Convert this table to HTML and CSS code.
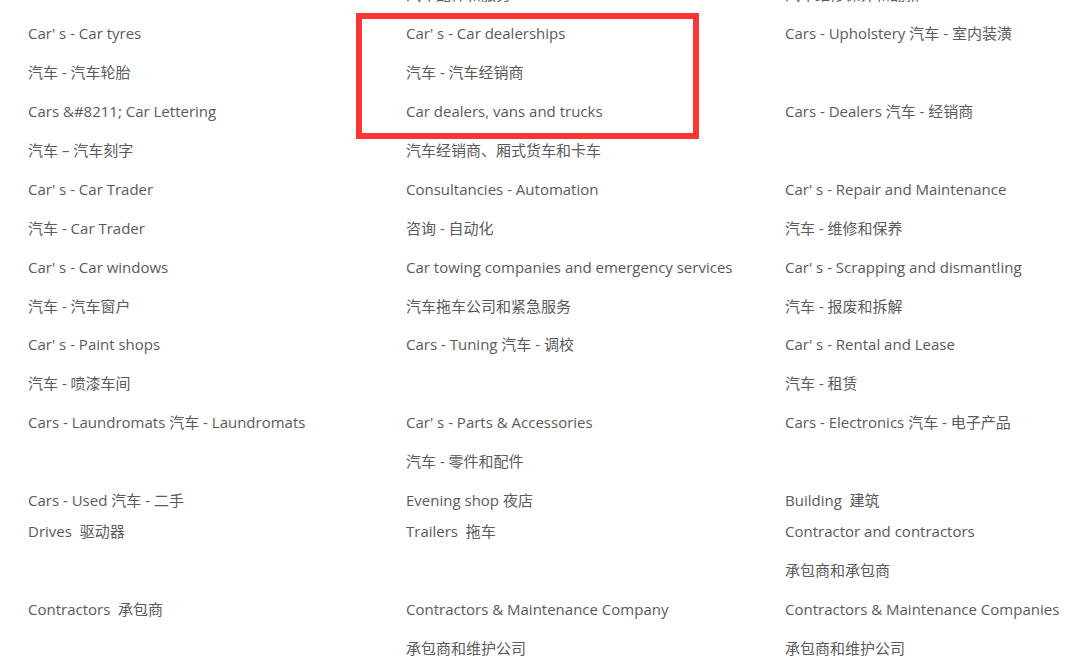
FILE: index.html
```html
<!DOCTYPE html>
<html lang="zh-CN">
<head>
    <meta charset="UTF-8">
    <meta name="viewport" content="width=device-width, initial-scale=1.0">
    <title>Cars - Categories</title>
    <link rel="stylesheet" href="styles.css">
</head>
<body>
    <div class="page">
        <div class="categories">
            <!-- row 0, scrolled off the top -->
            <div class="cell"></div>
            <div class="cell"><p>汽车配件和服务</p></div>
            <div class="cell"><p>汽车维修保养和翻新</p></div>

            <div class="cell">
                <p>Car' s - Car tyres</p>
                <p>汽车 - 汽车轮胎</p>
            </div>
            <div class="cell">
                <p>Car' s - Car dealerships</p>
                <p>汽车 - 汽车经销商</p>
            </div>
            <div class="cell">
                <p>Cars - Upholstery 汽车 - 室内装潢</p>
            </div>

            <div class="cell">
                <p>Cars &amp;#8211; Car Lettering</p>
                <p>汽车 – 汽车刻字</p>
            </div>
            <div class="cell">
                <p>Car dealers, vans and trucks</p>
                <p>汽车经销商、厢式货车和卡车</p>
            </div>
            <div class="cell">
                <p>Cars - Dealers 汽车 - 经销商</p>
            </div>

            <div class="cell">
                <p>Car' s - Car Trader</p>
                <p>汽车 - Car Trader</p>
            </div>
            <div class="cell">
                <p>Consultancies - Automation</p>
                <p>咨询 - 自动化</p>
            </div>
            <div class="cell">
                <p>Car' s - Repair and Maintenance</p>
                <p>汽车 - 维修和保养</p>
            </div>

            <div class="cell">
                <p>Car' s - Car windows</p>
                <p>汽车 - 汽车窗户</p>
            </div>
            <div class="cell">
                <p>Car towing companies and emergency services</p>
                <p>汽车拖车公司和紧急服务</p>
            </div>
            <div class="cell">
                <p>Car' s - Scrapping and dismantling</p>
                <p>汽车 - 报废和拆解</p>
            </div>

            <div class="cell">
                <p>Car' s - Paint shops</p>
                <p>汽车 - 喷漆车间</p>
            </div>
            <div class="cell">
                <p>Cars - Tuning 汽车 - 调校</p>
            </div>
            <div class="cell">
                <p>Car' s - Rental and Lease</p>
                <p>汽车 - 租赁</p>
            </div>

            <div class="cell">
                <p>Cars - Laundromats 汽车 - Laundromats</p>
            </div>
            <div class="cell">
                <p>Car' s - Parts &amp; Accessories</p>
                <p>汽车 - 零件和配件</p>
            </div>
            <div class="cell">
                <p>Cars - Electronics 汽车 - 电子产品</p>
            </div>

            <div class="cell">
                <p>Cars - Used 汽车 - 二手<br>Drives &nbsp;驱动器</p>
            </div>
            <div class="cell">
                <p>Evening shop 夜店<br>Trailers &nbsp;拖车</p>
            </div>
            <div class="cell">
                <p>Building &nbsp;建筑<br>Contractor and contractors</p>
                <p>承包商和承包商</p>
            </div>

            <div class="cell">
                <p>Contractors &nbsp;承包商</p>
            </div>
            <div class="cell">
                <p>Contractors &amp; Maintenance Company</p>
                <p>承包商和维护公司</p>
            </div>
            <div class="cell">
                <p>Contractors &amp; Maintenance Companies</p>
                <p>承包商和维护公司</p>
            </div>
        </div>

        <!-- red highlight drawn over the dealership entries -->
        <div class="highlight"></div>
    </div>
</body>
</html>
```

FILE: styles.css
```css
body {
    margin: 0;
    padding: 0;
    background-color: #ffffff;
    font-family: 'Open Sans', 'Noto Sans CJK SC', sans-serif;
    font-size: 15px;
    color: #5a5a5a;
}
.page {
    position: relative;
    display: flow-root;
    height: 671px;
    overflow: hidden;
}
.categories {
    display: grid;
    grid-template-columns: 378px 379px 1fr;
    align-items: start;
    margin-top: -21px;
    padding-left: 28px;
}
.cell p {
    margin: 0 0 7.95px;
    line-height: 31px;
    white-space: nowrap;
}
.highlight {
    position: absolute;
    left: 356px;
    top: 13px;
    width: 343px;
    height: 126px;
    box-sizing: border-box;
    border: 6px solid #fe3535;
}
```
